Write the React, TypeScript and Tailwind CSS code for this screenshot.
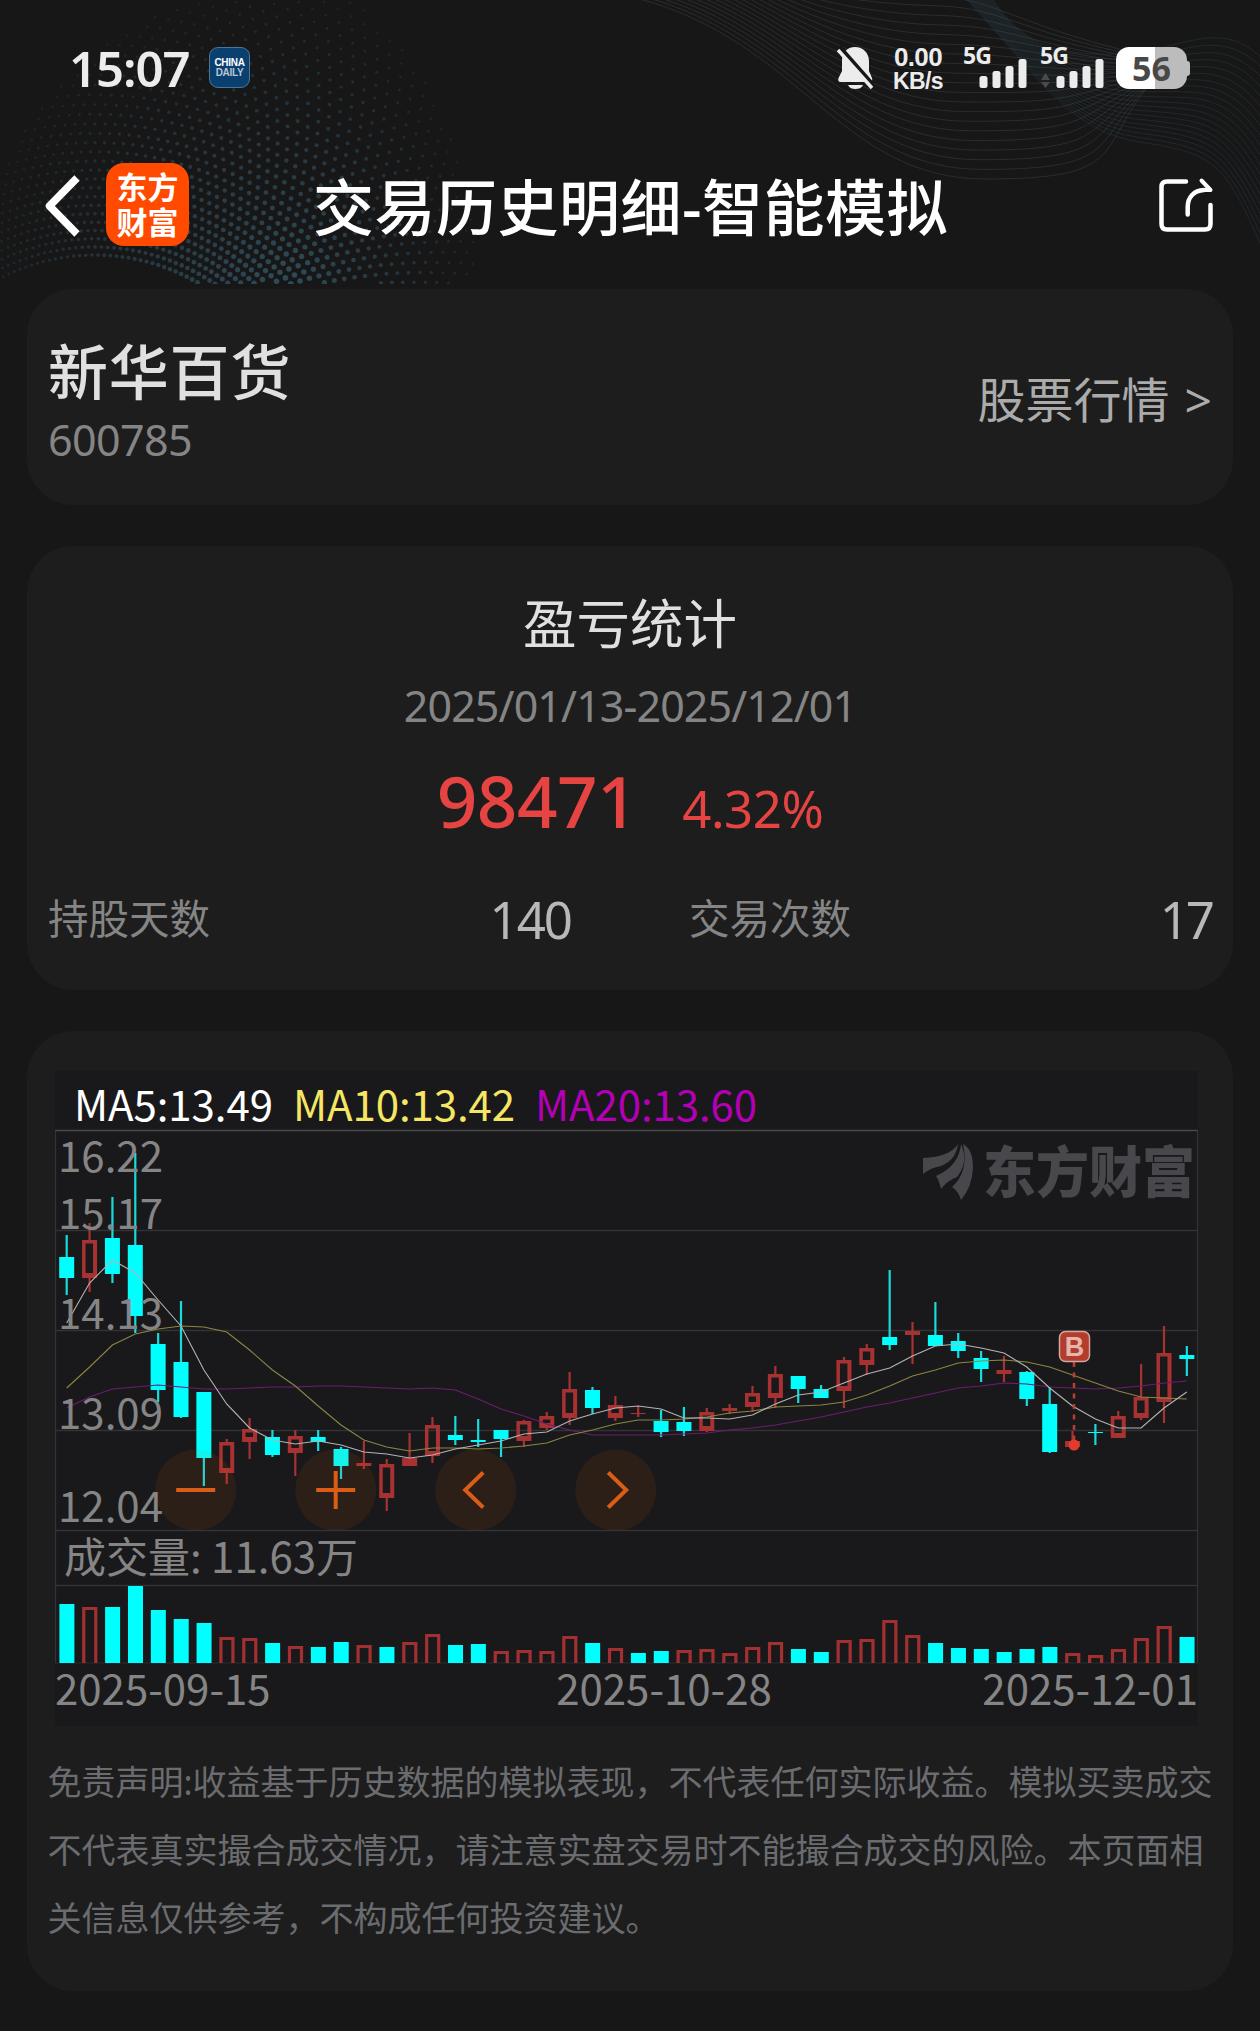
import type { ReactNode } from "react";

const CYAN = "#00ffff";
const RED = "#a83232";

type Candle = {
  h: number;
  t: number;
  b: number;
  l: number;
  up: boolean;
};

// high, body top, body bottom, low, rising
const RAW: [number, number, number, number, 0 | 1][] = [
  [1235, 1257, 1278, 1295, 0],
  [1223, 1240, 1278, 1292, 1],
  [1197, 1238, 1274, 1283, 0],
  [1153, 1245, 1316, 1333, 0],
  [1333, 1344, 1390, 1402, 0],
  [1301, 1362, 1417, 1418, 0],
  [1392, 1392, 1458, 1486, 0],
  [1439, 1442, 1473, 1484, 1],
  [1418, 1429, 1442, 1459, 1],
  [1430, 1437, 1455, 1457, 0],
  [1430, 1436, 1453, 1476, 1],
  [1430, 1437, 1442, 1451, 0],
  [1447, 1449, 1466, 1479, 0],
  [1441, 1463, 1466, 1469, 1],
  [1459, 1464, 1498, 1511, 1],
  [1433, 1458, 1466, 1466, 1],
  [1417, 1425, 1456, 1463, 1],
  [1416, 1435, 1440, 1445, 0],
  [1419, 1440, 1442, 1447, 0],
  [1430, 1430, 1439, 1457, 0],
  [1420, 1421, 1441, 1447, 1],
  [1412, 1416, 1428, 1430, 1],
  [1372, 1389, 1418, 1425, 1],
  [1387, 1390, 1408, 1414, 0],
  [1396, 1405, 1418, 1421, 1],
  [1406, 1413, 1414, 1417, 1],
  [1410, 1421, 1432, 1437, 0],
  [1407, 1422, 1431, 1436, 0],
  [1408, 1412, 1431, 1432, 1],
  [1404, 1408, 1411, 1414, 1],
  [1386, 1393, 1407, 1412, 1],
  [1366, 1374, 1398, 1408, 1],
  [1376, 1376, 1389, 1403, 0],
  [1385, 1389, 1398, 1398, 0],
  [1357, 1360, 1391, 1408, 1],
  [1344, 1348, 1365, 1375, 1],
  [1270, 1337, 1345, 1350, 0],
  [1322, 1331, 1335, 1364, 1],
  [1302, 1335, 1346, 1346, 0],
  [1333, 1341, 1351, 1358, 0],
  [1351, 1358, 1369, 1382, 0],
  [1356, 1370, 1374, 1382, 1],
  [1371, 1372, 1399, 1406, 0],
  [1387, 1404, 1452, 1453, 0],
  [1431, 1441, 1447, 1449, 1],
  [1424, 1432, 1433, 1445, 0],
  [1411, 1416, 1438, 1438, 1],
  [1364, 1397, 1418, 1420, 1],
  [1326, 1353, 1402, 1423, 1],
  [1346, 1355, 1359, 1376, 0],
];

const CANDLES: Candle[] = RAW.map(([h, t, b, l, up]) => ({ h, t, b, l, up: up === 1 }));

const VOLUME_TOPS = [
  1604, 1607, 1607, 1586, 1610, 1619, 1623, 1637, 1638, 1643, 1646, 1647, 1642, 1645, 1647, 1642, 1634, 1645, 1644,
  1651, 1650, 1651, 1636, 1643, 1648, 1653, 1651, 1650, 1649, 1653, 1647, 1642, 1649, 1652, 1640, 1639, 1620, 1635,
  1643, 1648, 1649, 1652, 1649, 1647, 1653, 1655, 1649, 1638, 1626, 1637,
];

// days on which the volume bar is coloured the other way round than the candle
const VOLUME_FLIPS = [14, 19, 25, 27, 36, 41, 45];

const MA5 = [
  1323, 1283, 1260, 1273, 1300, 1326, 1370, 1404, 1428, 1440, 1444, 1441, 1445, 1452, 1454, 1458, 1455, 1449, 1445,
  1441, 1434, 1432, 1421, 1414, 1408, 1406, 1409, 1418, 1418, 1419, 1415, 1404, 1395, 1392, 1383, 1374, 1368, 1356,
  1346, 1344, 1348, 1353, 1367, 1388, 1406, 1419, 1428, 1428, 1408, 1392,
];
const MA10 = [
  1388, 1367, 1345, 1334, 1329, 1326, 1327, 1332, 1350, 1370, 1386, 1406, 1425, 1440, 1447, 1451, 1448, 1448, 1449,
  1448, 1446, 1443, 1435, 1430, 1424, 1420, 1420, 1419, 1417, 1413, 1411, 1407, 1406, 1405, 1402, 1395, 1386, 1376,
  1370, 1363, 1361, 1360, 1362, 1367, 1375, 1383, 1391, 1397, 1398, 1399,
];
const MA20 = [
  1408, 1397, 1389, 1387, 1385, 1387, 1389, 1389, 1388, 1387, 1387, 1386, 1386, 1387, 1388, 1389, 1388, 1390, 1399,
  1409, 1416, 1424, 1430, 1435, 1435, 1435, 1435, 1434, 1433, 1430, 1428, 1425, 1421, 1417, 1412, 1407, 1403, 1398,
  1393, 1388, 1386, 1383, 1384, 1387, 1388, 1389, 1388, 1386, 1383, 1381,
];

const xAt = (i: number) => 66.7 + i * 22.86;
const linePoints = (values: number[]) => values.map((y, i) => `${xAt(i).toFixed(1)},${y}`).join(" ");

const PRICE_LABELS = [
  { text: "16.22", y: 1171.5 },
  { text: "15.17", y: 1228.5 },
  { text: "14.13", y: 1328.5 },
  { text: "13.09", y: 1428.5 },
  { text: "12.04", y: 1521.5 },
];

/** Dotted wave on the left of the header: wide arcs of dots, brightest at the bottom. */
function buildDots() {
  const dots: { x: number; y: number; r: number; o: number }[] = [];
  for (let ring = 0; ring < 52; ring++) {
    const radius = 205 + ring * 8 + ring * ring * 0.05;
    const n = 210;
    for (let k = 0; k < n; k++) {
      const a = ((k + (ring % 2) / 2) / n) * Math.PI * 2;
      const x = 95 + Math.cos(a) * radius;
      const y = 460 + Math.sin(a) * radius;
      if (x < 0 || x > 560 || y < 0 || y > 284) continue;
      const d = Math.hypot((x - 290) / (x > 290 ? 0.72 : 1.2), (y - 300) / 1.2);
      const o = 1 - d / 270;
      if (o < 0.03) continue;
      dots.push({ x, y, r: 1.2 + o * 1.7, o: 0.18 + o * 0.64 });
    }
  }
  return dots;
}
const DOTS = buildDots();

/** Family of smooth curves blended between two control polygons. */
function blendCurves(from: number[], to: number[], count: number) {
  return Array.from({ length: count }, (_, i) => {
    const k = i / (count - 1);
    const p = from.map((v, j) => (v + (to[j] - v) * k).toFixed(1));
    return `M${p[0]} ${p[1]} C${p[2]} ${p[3]} ${p[4]} ${p[5]} ${p[6]} ${p[7]} S${p[8]} ${p[9]} ${p[10]} ${p[11]}`;
  });
}

const GREY_CURVES = blendCurves(
  [636, -2, 800, 40, 840, 179, 985, 179, 1095, 150, 1150, 84],
  [768, -30, 770, -14, 860, -6, 930, -4, 1010, 26, 1165, 60],
  20
);
const TEAL_CURVES = blendCurves(
  [945, -22, 1030, 60, 1060, 130, 1140, 142, 1225, 165, 1266, 256],
  [990, -6, 1020, 46, 1060, 56, 1120, 54, 1220, 14, 1266, 62],
  20
);

function HeaderArt() {
  return (
    <svg className="pointer-events-none absolute left-0 top-0" width="1260" height="284" viewBox="0 0 1260 284" aria-hidden="true">
      <g fill="#35586b">
        {DOTS.map((d, i) => (
          <circle key={i} cx={d.x.toFixed(1)} cy={d.y.toFixed(1)} r={d.r.toFixed(2)} opacity={d.o.toFixed(2)} />
        ))}
      </g>
      <g fill="none" stroke="#8a9499" strokeWidth="1" opacity="0.17">
        {GREY_CURVES.map((d) => (
          <path key={d} d={d} />
        ))}
      </g>
      <g fill="none" stroke="#3f7085" strokeWidth="1" opacity="0.2">
        {TEAL_CURVES.map((d) => (
          <path key={d} d={d} />
        ))}
      </g>
    </svg>
  );
}

function BellOff() {
  return (
    <svg className="ml-[587px] mt-[46px] shrink-0" width="37" height="44" viewBox="0 0 37 44" fill="#ececec">
      <path d="M18 1 C26 1 32 7 32 15 V25 L35 32 Q36 36 33 36 H3.500 Q0.500 36 1.500 32 L5 25 V15 C5 7 10 1 18 1Z" />
      <path d="M11 39 H26 C24.500 42 22 43 18.500 43 S12.500 42 11 39Z" />
      <path d="M2 0 L39 42" stroke="#171717" strokeWidth="4" />
      <path d="M1 4 L35 42" stroke="#ececec" strokeWidth="3.500" />
    </svg>
  );
}

function Signal({ arrows = false }: { arrows?: boolean }) {
  return (
    <div className="relative mt-[46px] h-[43px] w-[66px] shrink-0">
      <span className="block text-[23px] leading-[18px] font-bold tracking-[-1px]">5G</span>
      <svg className="absolute left-0 top-0" width="66" height="43" viewBox="0 0 66 43" fill="#ececec">
        {arrows && <path d="M1 34 L5.500 27 L10 34Z M1 36 L5.500 42 L10 36Z" fill="#4a4a4a" />}
        <rect x="16.500" y="30" width="8" height="12" rx="2.500" />
        <rect x="29.500" y="25" width="8" height="17" rx="2.500" />
        <rect x="42.500" y="20" width="8" height="22" rx="2.500" />
        <rect x="55.500" y="13" width="8" height="29" rx="2.500" />
      </svg>
    </div>
  );
}

function StatusBar() {
  return (
    <div className="flex h-[122px] items-start text-[#ececec]">
      <span className="ml-[69px] mt-[36px] w-[123px] text-[49px] leading-[64px] font-semibold tracking-[-1px]">15:07</span>
      <div className="ml-[17px] mt-[47px] flex h-[41px] w-[41px] shrink-0 flex-col items-center justify-center rounded-[9px] border border-[#4d7596] bg-[#0a4070] font-['Liberation_Sans'] text-[10px] leading-[10px] font-bold tracking-[-0.3px]">
        <span className="text-white">CHINA</span>
        <span className="text-[#b8c6d4]">DAILY</span>
      </div>
      <BellOff />
      <div className="ml-[15px] mt-[46px] flex w-[58px] shrink-0 flex-col items-center font-['Liberation_Sans'] text-[26px] leading-[23px] font-bold tracking-tight">
        <span>0.00</span>
        <span className="text-[23px] leading-[24px]">KB/s</span>
      </div>
      <div className="ml-[16px] flex gap-[11px]">
        <Signal />
        <Signal arrows />
      </div>
      <div className="ml-[10px] mt-[47px] flex shrink-0 items-center">
        <div className="flex h-[42px] w-[71px] items-center justify-center rounded-[13px] bg-linear-to-r from-white from-[55%] to-[#bcbcbc] to-[55%] text-[34px] leading-[42px] font-bold text-[#484848]">
          56
        </div>
        <div className="h-[15px] w-[3px] rounded-r-sm bg-[#bcbcbc]" />
      </div>
    </div>
  );
}

function NavBar() {
  return (
    <div className="flex h-[167px] items-start pt-[41px]">
      <svg className="ml-[44px] mt-[12px] shrink-0" width="38" height="62" viewBox="0 0 38 62" fill="none" stroke="#fff" strokeWidth="7.500">
        <path d="M33 3 L5.500 31 L33 59" strokeLinejoin="round" />
      </svg>
      <div className="ml-[24px] flex h-[83px] w-[83px] shrink-0 flex-col items-center justify-center rounded-[18px] bg-[#ff4a00] text-[31px] leading-[35px] font-bold text-white">
        <span>东方</span>
        <span>财富</span>
      </div>
      <h1 className="ml-[124px] mt-[1px] w-[640px] text-[61px] leading-[88px] font-medium tracking-[0.5px] whitespace-nowrap text-white">
        交易历史明细-智能模拟
      </h1>
      <svg className="ml-[205px] mt-[13px] shrink-0" width="56" height="58" viewBox="0 0 56 58" fill="none" stroke="#fff" strokeWidth="4.500" strokeLinecap="round" strokeLinejoin="round">
        <path d="M28 5.500 H9 Q3.500 5.500 3.500 11 V48 Q3.500 53.500 9 53.500 H47 Q52.500 53.500 52.500 48 V29" />
        <path d="M29.700 38.500 V31 C29.700 21 36 14.500 46 14" />
        <path d="M43.500 4.500 L52.500 14 H45.500" strokeWidth="4" />
      </svg>
    </div>
  );
}

function Card({ className, children }: { className: string; children: ReactNode }) {
  return <section className={`mx-[27px] rounded-[46px] bg-[#1d1d1d] ${className}`}>{children}</section>;
}

function StockCard() {
  return (
    <Card className="flex h-[216px] items-center justify-between px-[21px]">
      <div>
        <h2 className="mt-[-4px] text-[60px] leading-[88px] font-medium tracking-[0.8px] text-[#e0e0e0]">新华百货</h2>
        <p className="mt-px text-[43px] leading-[46px] tracking-[-0.6px] text-[#858585]">600785</p>
      </div>
      <a className="mt-[6px] flex items-center gap-[15px] text-[48px] leading-[60px] text-[#ababab]">
        股票行情 <span>&gt;</span>
      </a>
    </Card>
  );
}

function StatsCard() {
  return (
    <Card className="mt-[41px] h-[444px] px-[21px] pt-[40px] text-center">
      <h2 className="text-[53.500px] leading-[76px] text-[#e0e0e0]">盈亏统计</h2>
      <p className="mt-[14px] text-[43px] leading-[60px] tracking-[-0.9px] text-[#858585]">2025/01/13-2025/12/01</p>
      <div className="mt-[20px] flex items-baseline justify-center gap-[45px] text-[#e64442]">
        <span className="text-[71px] leading-[90px] font-medium tracking-[-0.5px]">98471</span>
        <span className="text-[51px] leading-[60px] tracking-[-0.5px]">4.32%</span>
      </div>
      <div className="mt-[43px] flex items-center text-[40.5px] leading-[60px] text-[#858585]">
        <span className="w-[300px] text-left">持股天数</span>
        <span className="w-[223px] text-right text-[51px] tracking-[-2px] text-[#b8b8b8]">140</span>
        <span className="ml-[118px]">交易次数</span>
        <span className="ml-auto text-[51px] tracking-[-3px] text-[#b8b8b8]">17</span>
      </div>
    </Card>
  );
}

function Watermark() {
  return (
    <g fill="#47474c">
      <path d="M923 1158 Q950 1157 958 1144 Q956 1160 941 1166 Q930 1168 923 1174Z" />
      <path d="M936 1176 Q959 1166 961 1144 Q969 1162 957 1177 Q948 1180 941 1189 Q939 1180 936 1176Z" />
      <path d="M952 1187 Q969 1172 963 1144 Q973 1149 973 1168 Q972 1187 961 1200 Q959 1192 952 1187Z" />
      <text x="983" y="1192" fontSize="55" fontWeight="900" textLength="212" lengthAdjust="spacingAndGlyphs">
        东方财富
      </text>
    </g>
  );
}

function ZoomButton({ cx, d }: { cx: number; d: string }) {
  return (
    <g>
      <circle cx={cx} cy="1490" r="40.500" fill="#ff6a00" fillOpacity="0.08" />
      <path d={d} transform={`translate(${cx} 1490)`} fill="none" stroke="#d95d17" strokeWidth="4" />
    </g>
  );
}

function KLineChart() {
  return (
    <svg className="block" width="1143" height="655" viewBox="55 1071 1143 655" fontFamily='"Noto Sans CJK SC", sans-serif'>
      <rect x="55" y="1071" width="1143" height="655" fill="#19191b" />

      <g fontSize="42">
        <text x="74" y="1120.500" fill="#fff" textLength="199">MA5:13.49</text>
        <text x="293" y="1120.500" fill="#f5e663" textLength="222">MA10:13.42</text>
        <text x="535" y="1120.500" fill="#b400b4" textLength="222">MA20:13.60</text>
      </g>

      {/* grid */}
      <g stroke="#333335" strokeWidth="1.300">
        <path d="M55 1130.500 H1198" stroke="#49494b" />
        <path d="M55 1230.500 H1198 M55 1330.500 H1198 M55 1430.500 H1198 M55 1530.500 H1198 M55 1585.500 H1198" />
        <path d="M55 1663 H1198" stroke="#262628" />
        <path d="M55.500 1130.500 V1663 M1197.500 1130.500 V1663" />
      </g>

      <Watermark />

      {CANDLES.map((c, i) => {
        const x = xAt(i);
        const color = c.up ? RED : CYAN;
        const hollow = c.up && c.b - c.t > 9;
        return (
          <g key={i}>
            <path d={`M${x} ${c.h} V${c.t} M${x} ${c.b} V${c.l}`} stroke={c.up ? RED : "#18dada"} strokeWidth="2.200" />
            {hollow ? (
              <path
                fillRule="evenodd"
                fill={color}
                d={`M${x - 7.5} ${c.t} h15 V${c.b} h-15 Z M${x - 4} ${c.t + 3.5} V${c.b - 5} h7.500 V${c.t + 3.5} Z`}
              />
            ) : (
              <rect x={x - 7.5} y={c.t} width="15" height={c.b - c.t} fill={color} />
            )}
          </g>
        );
      })}

      {/* moving averages */}
      <g fill="none" strokeWidth="1.100">
        <polyline points={linePoints(MA20)} stroke="#6d1c70" />
        <polyline points={linePoints(MA10)} stroke="#8b8642" />
        <polyline points={linePoints(MA5)} stroke="#b4b4b4" />
      </g>

      {VOLUME_TOPS.map((top, i) => {
        const up = CANDLES[i].up !== VOLUME_FLIPS.includes(i);
        const x = xAt(i) - 7.3;
        return up ? (
          <path key={i} d={`M${x + 1.5} 1663 V${top + 1.5} h12 V1663`} fill="none" stroke="#a23030" strokeWidth="3.200" />
        ) : (
          <rect key={i} x={x} y={top} width="15" height={1663 - top} fill={CYAN} />
        );
      })}

      <g fill="#858585" fontSize="42">
        {PRICE_LABELS.map((p) => (
          <text key={p.text} x="58" y={p.y} textLength="105">
            {p.text}
          </text>
        ))}
        <text x="64" y="1573" textLength="294">成交量: 11.63万</text>
        <text x="55" y="1705">2025-09-15</text>
        <text x="664" y="1705" textAnchor="middle">2025-10-28</text>
        <text x="1198" y="1705" textAnchor="end">2025-12-01</text>
      </g>

      {/* buy marker */}
      <path d="M1074 1362 V1440" stroke="#b5402f" strokeWidth="2.500" strokeDasharray="5 5.500" />
      <circle cx="1074" cy="1445" r="5.500" fill="#e23b2e" />
      <rect x="1059.500" y="1331.500" width="30" height="30" rx="6" fill="#b43c2c" stroke="#d3a89f" strokeWidth="1.500" />
      <text x="1074.500" y="1356" fontSize="27" fontWeight="700" fill="#e3b5ad" textAnchor="middle" fontFamily='"Liberation Sans", sans-serif'>
        B
      </text>

      <ZoomButton cx={195.7} d="M-19.500 0 H19.500" />
      <ZoomButton cx={335.7} d="M-19.500 0 H19.500 M0 -19 V19" />
      <ZoomButton cx={475.7} d="M7.500 -17.500 L-10.500 0 L7.500 17.500" />
      <ZoomButton cx={615.7} d="M-7.500 -17.500 L10.500 0 L-7.500 17.500" />
    </svg>
  );
}

export default function App() {
  return (
    <main className='relative h-[2031px] w-[1260px] overflow-hidden bg-[#171717] font-["Noto_Sans","Noto_Sans_CJK_SC",sans-serif]'>
      <HeaderArt />
      <div className="relative">
        <StatusBar />
        <NavBar />
      </div>
      <StockCard />
      <StatsCard />
      <Card className="mt-[41px] h-[960px] pt-[40px]">
        <div className="ml-[28px]">
          <KLineChart />
        </div>
        <p className="mx-[20.5px] mt-[22px] text-[34px] leading-[68px] whitespace-nowrap text-[#6a6c70]">
          免责声明:收益基于历史数据的模拟表现，不代表任何实际收益。模拟买卖成交
          <br />
          不代表真实撮合成交情况，请注意实盘交易时不能撮合成交的风险。本页面相
          <br />
          关信息仅供参考，不构成任何投资建议。
        </p>
      </Card>
    </main>
  );
}
